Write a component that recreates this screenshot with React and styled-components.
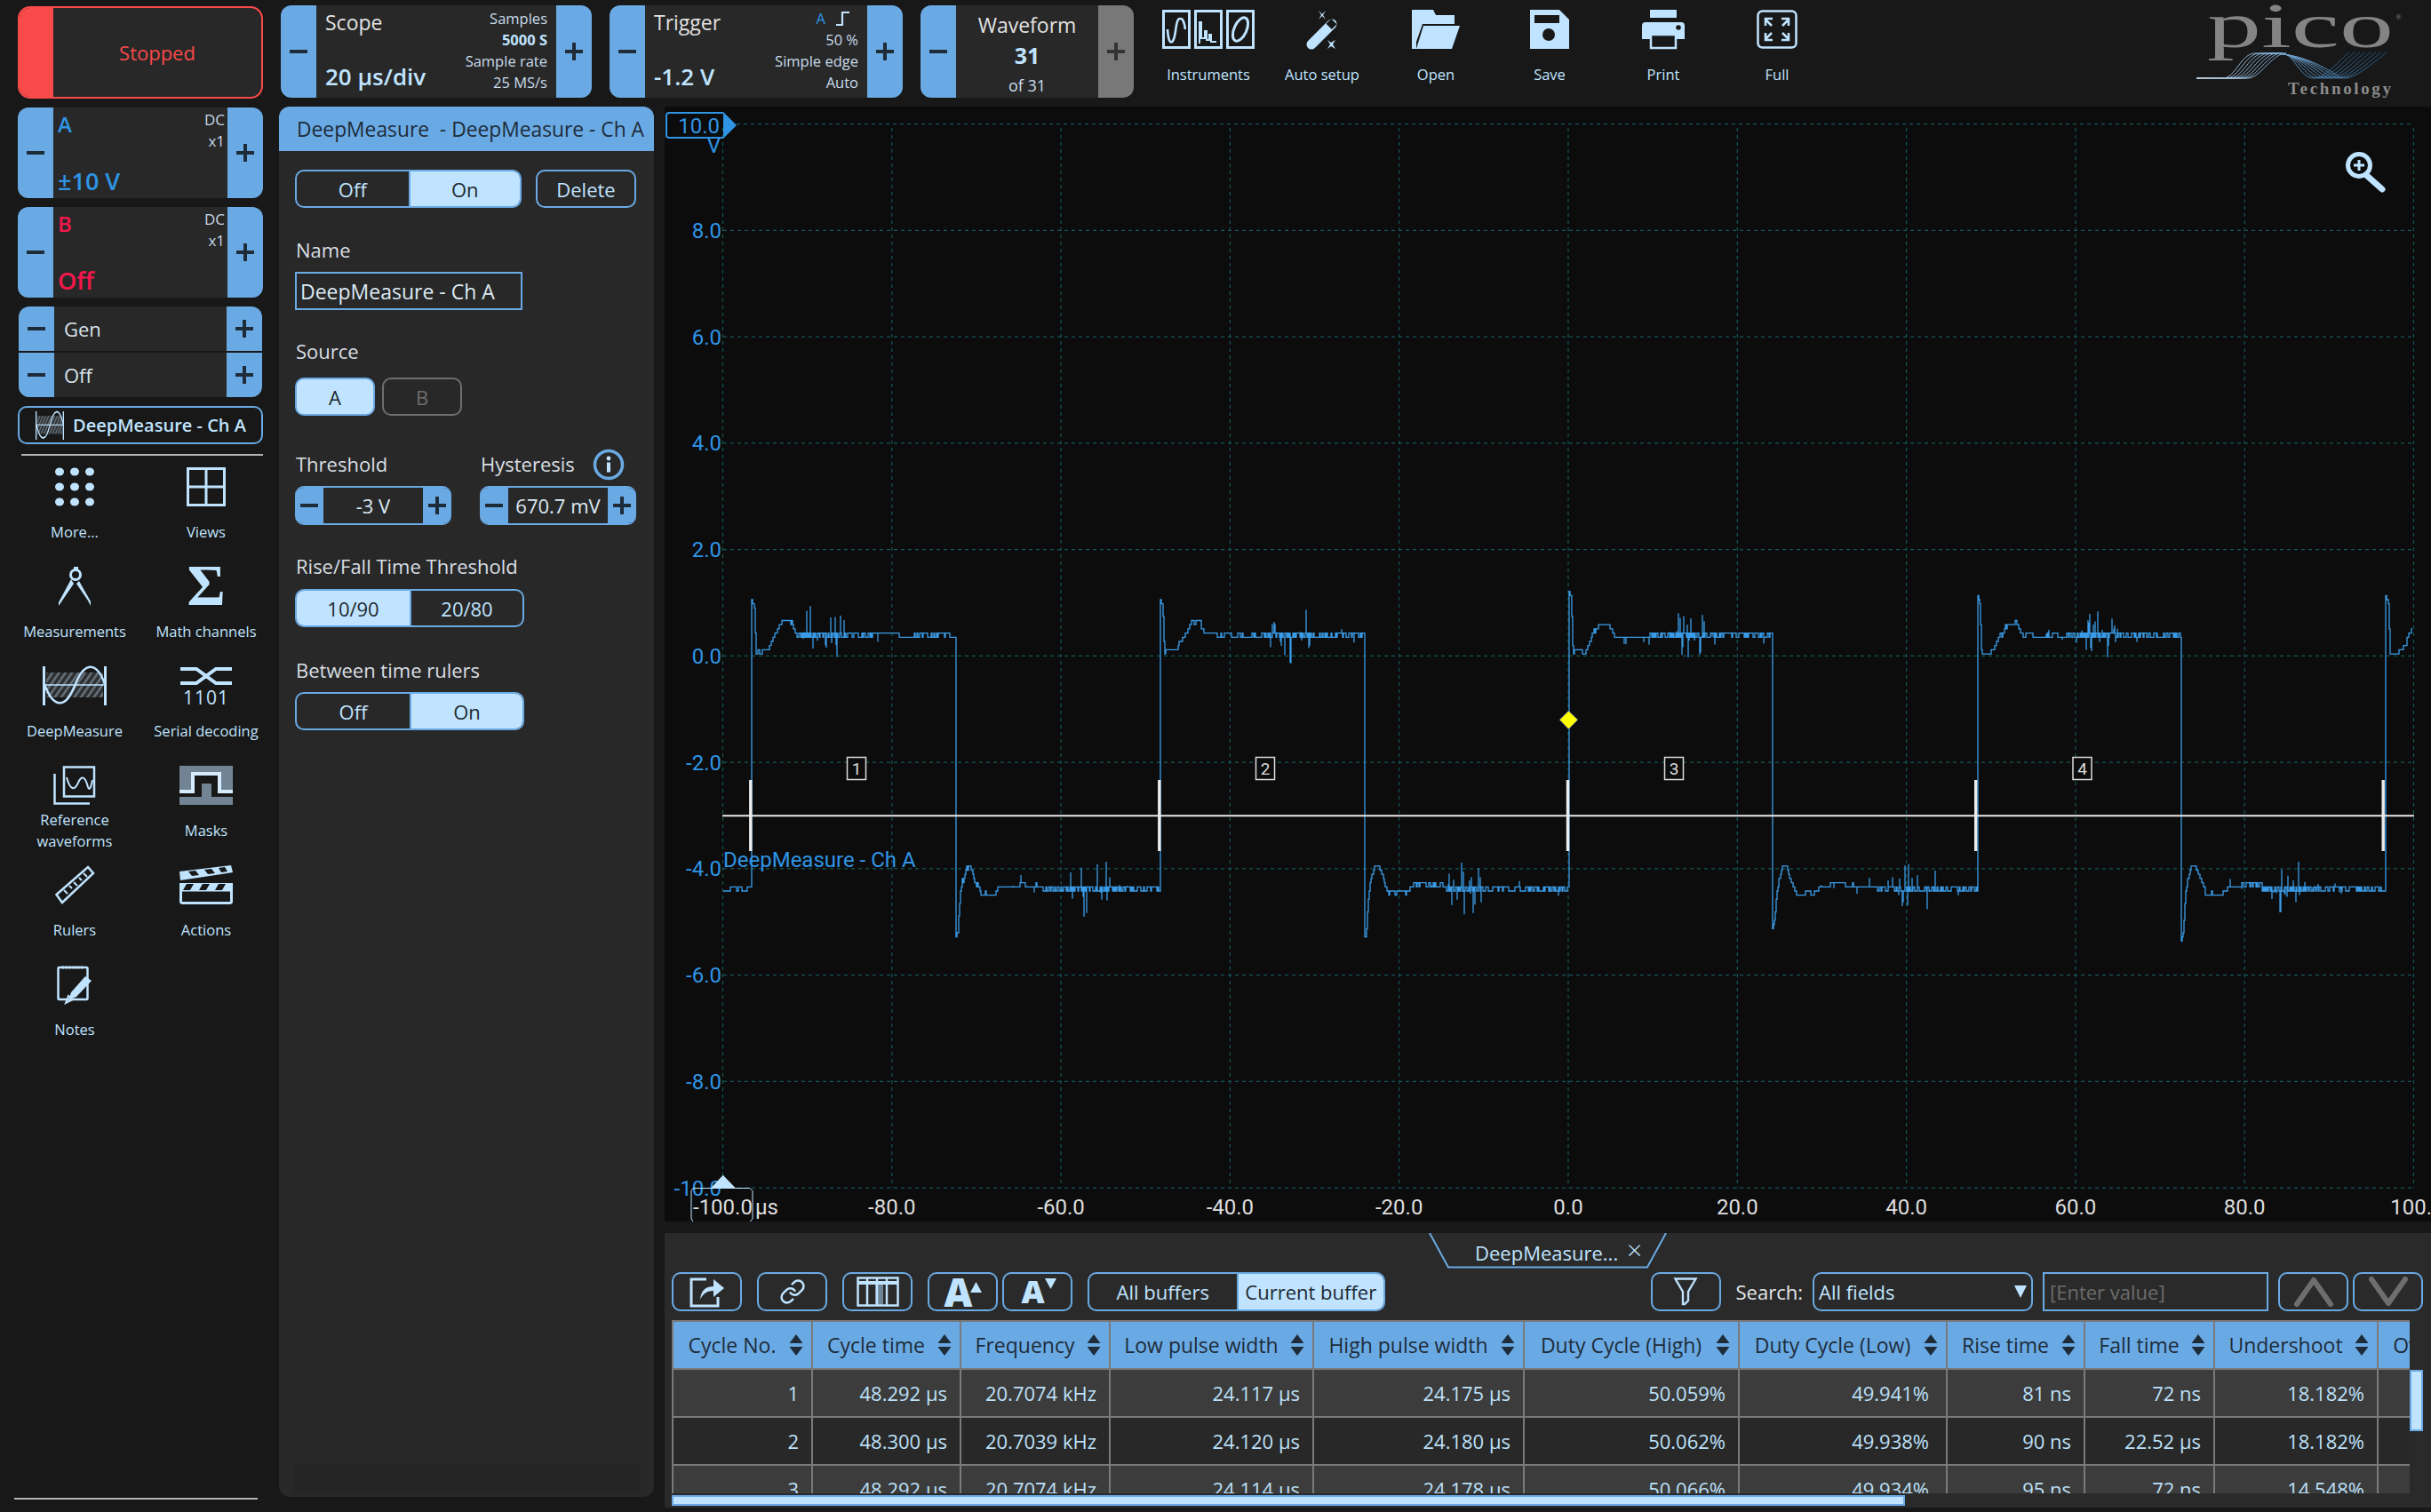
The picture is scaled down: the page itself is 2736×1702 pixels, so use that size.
import React from "react";
import styled, { createGlobalStyle } from "styled-components";
import { Link } from "lucide-react";

const ICE = "#c0e4ff";
const BLUE = "#6aaae4";
const BG = "#181818";
const PANEL = "#282828";
const INK = "#1e2c3a";
const SCOPE_BLUE = "#2f94e4";
const GRID = "#14565a";

const GlobalStyle = createGlobalStyle`
  html, body { margin: 0; padding: 0; background: ${BG}; }
  * { box-sizing: border-box; }
  body { font-family: "Open Sans", "Noto Sans", sans-serif; color: ${ICE}; }
`;

const Page = styled.div`
  width: 2736px;
  height: 1702px;
  display: grid;
  grid-template-columns: 314px 1fr;
  background: ${BG};
  overflow: hidden;
`;

/* ---------- left column ---------- */

const Sidebar = styled.aside`
  display: flex;
  flex-direction: column;
  gap: 10px;
  padding: 7px 18px 14px 20px;
  height: 1702px;
`;

const RunState = styled.div`
  height: 104px;
  display: flex;
  border: 2px solid #f94a4a;
  border-radius: 14px;
  background: ${PANEL};
  overflow: hidden;
`;

const RunFlag = styled.div`
  width: 38px;
  background: #f94a4a;
`;

const RunText = styled.div`
  flex: 1;
  display: flex;
  align-items: center;
  justify-content: center;
  color: #f94a4a;
  font-size: 22px;
`;

const Card = styled.div`
  display: flex;
  height: ${(p) => p.$h || 102}px;
  width: ${(p) => (p.$w ? `${p.$w}px` : "auto")};
  background: ${PANEL};
  border-radius: 12px;
  overflow: hidden;
  flex: none;
`;

const Step = styled.div`
  position: relative;
  width: ${(p) => p.$w || 40}px;
  flex: none;
  background: ${(p) => (p.$muted ? "#787878" : BLUE)};

  &::before {
    content: "";
    position: absolute;
    left: 50%;
    top: 50%;
    width: ${(p) => p.$size || 20}px;
    height: 4px;
    transform: translate(-50%, -50%);
    background: ${(p) => (p.$muted ? "#333" : INK)};
  }
  ${(p) =>
    p.$plus &&
    `&::after {
      content: "";
      position: absolute;
      left: 50%;
      top: 50%;
      width: 4px;
      height: ${p.$size || 20}px;
      transform: translate(-50%, -50%);
      background: ${p.$muted ? "#333" : INK};
    }`}
`;

const ChannelBody = styled.div`
  flex: 1;
  display: flex;
  justify-content: space-between;
  padding: 2px 3px 0 5px;
  font-size: 17px;
`;

const ChannelMain = styled.div`
  display: flex;
  flex-direction: column;
  justify-content: space-between;
  color: ${(p) => p.$color};
  padding-bottom: 1px;
`;

const ChannelName = styled.div`
  font-size: 24px;
  line-height: 32px;
  font-weight: 600;
  margin-top: 1px;
`;

const ChannelRange = styled.div`
  font-size: 27px;
  line-height: 36px;
  font-weight: 600;
`;

const ChannelSide = styled.div`
  text-align: right;
  line-height: 24px;
  color: #c6d8e6;
`;

const GenStack = styled.div`
  display: flex;
  flex-direction: column;
  gap: 2px;
  flex: none;
  margin: 0 1px;
`;

const GenRow = styled(Card)`
  border-radius: ${(p) => (p.$top ? "12px 12px 0 0" : "0 0 12px 12px")};
`;

const GenText = styled.div`
  flex: 1;
  display: flex;
  align-items: center;
  padding-left: 11px;
  font-size: 22px;
  color: #d9e4ec;
`;

const ActiveTool = styled.div`
  height: 43px;
  flex: none;
  display: flex;
  align-items: center;
  gap: 10px;
  padding-left: 18px;
  border: 2px solid ${BLUE};
  border-radius: 10px;
  font-size: 20px;
  font-weight: 600;
  color: ${ICE};
  white-space: nowrap;
`;

const Rule = styled.div`
  height: 2px;
  flex: none;
  background: #b4b4b4;
  margin: 1px 0 0 4px;
`;

const BottomRule = styled(Rule)`
  margin: auto 6px 0 -4px;
`;

const ToolGrid = styled.div`
  display: grid;
  grid-template-columns: 148px 148px;
  grid-auto-rows: 112px;
  margin: 3px -10px 0;
`;

const Tool = styled.div`
  display: flex;
  flex-direction: column;
  align-items: center;
  width: ${(p) => p.$w || "auto"};
  flex: none;
`;

const ToolIcon = styled.div`
  height: 44px;
  display: flex;
  align-items: center;
`;

const ToolLabel = styled.div`
  height: 57px;
  display: flex;
  align-items: center;
  text-align: center;
  font-size: 16.5px;
  line-height: 24px;
  color: ${ICE};
`;

/* ---------- top toolbar ---------- */

const Main = styled.div`
  display: flex;
  flex-direction: column;
  min-width: 0;
`;

const TopBar = styled.header`
  height: 120px;
  flex: none;
  display: flex;
  align-items: flex-start;
  padding: 6px 29px 0 2px;
`;

const CardGap = styled.div`
  width: 20px;
  flex: none;
`;

const CardBody = styled.div`
  flex: 1;
  display: flex;
  justify-content: space-between;
  padding: 3px 10px 0;
`;

const CardMain = styled.div`
  display: flex;
  flex-direction: column;
  justify-content: space-between;
  padding: 0 0 6px;
`;

const CardTitle = styled.div`
  font-size: 23px;
  line-height: 32px;
  color: #e2e2e2;
`;

const CardValue = styled.div`
  font-size: 26px;
  line-height: 36px;
  font-weight: 600;
  color: ${ICE};
  white-space: nowrap;
`;

const CardSide = styled.div`
  text-align: right;
  font-size: 16.5px;
  line-height: 24px;
  color: #c8dceb;
  white-space: nowrap;
`;

const Strong = styled.div`
  font-weight: 700;
  color: ${ICE};
`;

const TrigSource = styled.div`
  display: flex;
  justify-content: flex-end;
  align-items: center;
  gap: 12px;
  color: ${SCOPE_BLUE};
  padding-right: 10px;
`;

const WaveformBody = styled.div`
  flex: 1;
  display: flex;
  flex-direction: column;
  align-items: center;
  padding-top: 5px;
  line-height: 34px;
  font-size: 23px;
  color: #e2e2e2;
`;

const WaveNumber = styled.div`
  font-size: 25px;
  font-weight: 700;
  color: ${ICE};
`;

const WaveOf = styled.div`
  font-size: 18px;
  color: #c8dceb;
`;

const ToolsRow = styled.div`
  display: flex;
  padding: 5px 0 0 20px;
`;

const LogoBox = styled.div`
  margin-left: auto;
`;

/* ---------- config panel ---------- */

const Workspace = styled.div`
  flex: 1;
  display: flex;
  min-height: 0;
`;

const ConfigPanel = styled.section`
  width: 422px;
  height: 1565px;
  flex: none;
  display: flex;
  flex-direction: column;
  background: ${PANEL};
  border-radius: 12px;
  overflow: hidden;
`;

const ConfigHeader = styled.div`
  height: 50px;
  flex: none;
  display: flex;
  align-items: center;
  padding-left: 20px;
  background: ${BLUE};
  color: ${INK};
  font-size: 22.8px;
  white-space: pre;
`;

const ConfigBody = styled.div`
  flex: 1;
  padding: 21px 20px 0 18px;
  display: flex;
  flex-direction: column;
  font-size: 22px;
`;

const TopActions = styled.div`
  display: flex;
  justify-content: space-between;
`;

const Toggle = styled.div`
  display: grid;
  grid-template-columns: 1fr 1fr;
  width: ${(p) => p.$w}px;
  height: ${(p) => p.$h || 43}px;
  border: 2px solid ${BLUE};
  border-radius: 10px;
  overflow: hidden;
  flex: none;
`;

const Segment = styled.div`
  display: flex;
  align-items: center;
  justify-content: center;
  background: ${(p) => (p.$on ? ICE : "transparent")};
  color: ${(p) => (p.$on ? "#20282f" : ICE)};
  white-space: nowrap;
  & + & {
    border-left: 2px solid ${BLUE};
  }
`;

const OutlineButton = styled.div`
  width: ${(p) => p.$w}px;
  height: ${(p) => p.$h || 43}px;
  flex: none;
  display: flex;
  align-items: center;
  justify-content: center;
  border: 2px solid ${(p) => (p.$off ? "#6e6e6e" : BLUE)};
  border-radius: 10px;
  background: ${(p) => (p.$on ? ICE : "transparent")};
  color: ${(p) => (p.$on ? "#20282f" : p.$off ? "#6e6e6e" : ICE)};
`;

const FieldLabel = styled.div`
  display: flex;
  align-items: center;
  height: 32px;
  margin-top: ${(p) => p.$top}px;
  margin-bottom: ${(p) => p.$bottom}px;
  padding: 0 0 3px 1px;
  color: #d9dfe4;
  white-space: nowrap;
`;

const NameInput = styled.div`
  width: 256px;
  height: 43px;
  display: flex;
  align-items: center;
  padding-left: 4px;
  border: 2px solid ${BLUE};
  font-size: 23px;
  color: #dceaf5;
`;

const SourceRow = styled.div`
  display: flex;
  gap: 8px;
`;

const ThresholdRow = styled.div`
  display: flex;
  margin-top: 39px;
`;

const ThresholdCol = styled.div`
  width: ${(p) => p.$w}px;
  flex: none;
`;

const InfoIcon = styled.svg`
  margin: 3px 0 0 20px;
  flex: none;
`;

const Stepper = styled.div`
  width: 176px;
  height: 44px;
  display: flex;
  border-radius: 10px;
  overflow: hidden;
  border-top: 2px solid ${BLUE};
  border-bottom: 2px solid ${BLUE};
`;

const StepperValue = styled.div`
  flex: 1;
  display: flex;
  align-items: center;
  justify-content: center;
  color: #dceaf5;
  white-space: nowrap;
`;

const PanelScrollTrack = styled.div`
  height: 32px;
  margin: auto -4px 5px -2px;
  background: #252525;
  flex: none;
`;

/* ---------- plot ---------- */

const RightColumn = styled.div`
  margin-left: 12px;
  flex: 1;
  min-width: 0;
  display: flex;
  flex-direction: column;
`;

const PlotBox = styled.div`
  height: 1255px;
  flex: none;
  background: #0c0c0c;
`;

const PlotSvg = styled.svg`
  display: block;
  font-family: Roboto, sans-serif;
`;

/* ---------- data table ---------- */

const DataPanel = styled.section`
  position: relative;
  height: 309px;
  margin-top: 13px;
  flex: none;
  background: #2a2a2a;
`;

const TabStrip = styled.div`
  height: 44px;
  padding-left: 860px;
`;

const Tab = styled.div`
  position: relative;
  width: 268px;
  height: 40px;
  display: flex;
  align-items: center;
  justify-content: space-between;
  padding: 3px 28px 0 52px;
  font-size: 22px;
  color: ${ICE};
`;

const TabEdge = styled.svg`
  position: absolute;
  left: 0;
  top: 0;
`;

const TabClose = styled.span`
  font-size: 30px;
  font-weight: 300;
  line-height: 1;
  margin-top: -6px;
`;

const ActionRow = styled.div`
  height: 44px;
  display: flex;
  padding: 0 9px 0 8px;
  font-size: 22px;
`;

const ActionButton = styled.div`
  position: relative;
  width: 79px;
  height: 44px;
  flex: none;
  margin-left: ${(p) => p.$gap ?? 17}px;
  display: flex;
  align-items: center;
  justify-content: center;
  border: 2px solid ${BLUE};
  border-radius: 10px;
  color: ${ICE};
`;

const FontGlyph = styled.span`
  font-weight: 800;
  font-size: ${(p) => p.$size}px;
  line-height: 1;
  margin-right: 10px;
`;

const FontArrow = styled.svg`
  position: absolute;
  right: 16px;
  top: ${(p) => p.$top}px;
`;

const BufferToggle = styled(Toggle)`
  margin-left: 17px;
`;

const SearchGroup = styled.div`
  margin-left: auto;
  display: flex;
  align-items: center;
`;

const SearchLabel = styled.div`
  margin: 0 11px 0 17px;
  color: #e4e8eb;
`;

const SelectBox = styled.div`
  width: 248px;
  height: 44px;
  display: flex;
  align-items: center;
  justify-content: space-between;
  padding: 0 5px;
  border: 2px solid ${BLUE};
  border-radius: 10px;
  color: ${ICE};

  &::after {
    content: "";
    border-left: 7.5px solid transparent;
    border-right: 7.5px solid transparent;
    border-top: 14px solid ${ICE};
  }
`;

const EnterValue = styled.div`
  width: 254px;
  height: 44px;
  margin-left: 11px;
  display: flex;
  align-items: center;
  padding-left: 6px;
  border: 2px solid ${BLUE};
  color: #6c6c6c;
`;

const TableWrap = styled.div`
  width: 1956px;
  height: 195px;
  margin: 10px 0 0 8px;
  overflow: hidden;
  border-top: 2px solid #7a7a7a;
  border-left: 2px solid #7a7a7a;
  font-size: 22px;
`;

const COLS = "157px 167px 168px 229px 237px 242px 234px 155px 146px 184px 170px";

const HeadRow = styled.div`
  display: grid;
  grid-template-columns: ${COLS};
  height: 54px;
  background: ${BLUE};
  color: ${INK};
`;

const HeadCell = styled.div`
  display: flex;
  align-items: center;
  padding: 0 9px 0 2px;
  border-right: 2px solid #7a7a7a;
  border-bottom: 2px solid #7a7a7a;
  font-size: 23px;
  white-space: nowrap;
  overflow: hidden;
`;

const HeadText = styled.div`
  flex: 1;
  text-align: center;
`;

const SortGlyph = styled.svg`
  flex: none;
`;

const DataRow = styled.div`
  display: grid;
  grid-template-columns: ${COLS};
  height: 54px;
  background: ${(p) => (p.$odd ? "#3c3c3c" : "#282828")};
`;

const DataCell = styled.div`
  display: flex;
  align-items: center;
  justify-content: flex-end;
  padding-right: 14px;
  border-right: 2px solid #7a7a7a;
  border-bottom: 2px solid #7a7a7a;
  color: #bde0f8;
  white-space: nowrap;

  &:nth-child(7) {
    padding-right: 19px;
  }
`;

const VScrollThumb = styled.div`
  position: absolute;
  left: 1964px;
  top: 154px;
  width: 15px;
  height: 69px;
  background: ${ICE};
  border: 2px solid ${BLUE};
`;

const HScrollThumb = styled.div`
  width: 1388px;
  height: 12px;
  margin: 2px 0 0 8px;
  background: ${ICE};
  border: 2px solid ${BLUE};
`;

/* ---------- icons ---------- */

const Ice = ({ w, h, children, fill = ICE, stroke = "none", sw = 0, vb }) => (
  <svg
    width={w}
    height={h}
    viewBox={vb || `0 0 ${w} ${h}`}
    preserveAspectRatio="none"
    fill={fill}
    stroke={stroke}
    strokeWidth={sw}
    style={{ display: "block", overflow: "visible" }}
  >
    {children}
  </svg>
);

const DotsIcon = () => (
  <Ice w={44} h={44}>
    {[5, 22, 39].map((y) =>
      [5, 22, 39].map((x) => <ellipse key={`${x}${y}`} cx={x} cy={y} rx={5} ry={4.6} />)
    )}
  </Ice>
);

const ViewsIcon = () => (
  <Ice w={44} h={44} fill="none" stroke={ICE} sw={3}>
    <rect x={1.5} y={1.5} width={41} height={41} />
    <path d="M22 1.5V42.5M1.5 22H42.5" />
  </Ice>
);

const CompassIcon = () => (
  <Ice w={36} h={44}>
    <circle cx={19} cy={9} r={5.5} fill="none" stroke={ICE} strokeWidth={3} />
    <path d="M17 0h5v3h-5z" />
    <path d="M14 14L0 40v4L17 19zM23 16l-3 3 13 19 3 6V39z" />
  </Ice>
);

const SigmaIcon = () => (
  <Ice w={44} h={44}>
    <text
      x={22}
      y={43}
      textAnchor="middle"
      fontFamily="Liberation Serif, serif"
      fontWeight={700}
      fontSize={66}
    >
      Σ
    </text>
  </Ice>
);

const DeepMeasureIcon = ({ w = 72, h = 44 }) => (
  <Ice w={w} h={h} vb="0 0 72 44">
    <defs>
      <pattern id={`hatch${w}`} width="6" height="6" patternUnits="userSpaceOnUse" patternTransform="rotate(35)">
        <rect width="6" height="6" fill="#2c2e30" />
        <rect width="2.5" height="6" fill="#66727c" />
      </pattern>
    </defs>
    <rect x={4} y={7} width={64} height={28} fill={`url(#hatch${w})`} />
    <rect x={0} y={0} width={3} height={44} />
    <rect x={69} y={0} width={3} height={44} />
    <path d="M2 20C12 48 26 48 36 22S60 -8 70 20" fill="none" stroke={ICE} strokeWidth={2.5} />
    <path d="M2 21H70" stroke={ICE} strokeWidth={1.5} />
  </Ice>
);

const SerialIcon = () => (
  <Ice w={58} h={44}>
    <path d="M0 3H18L40 19H58M0 19H18L40 3H58" fill="none" stroke={ICE} strokeWidth={4} />
    <text x={29} y={43} textAnchor="middle" fontFamily="Open Sans, sans-serif" fontSize={21} letterSpacing={1}>
      1101
    </text>
  </Ice>
);

const ReferenceIcon = () => (
  <Ice w={48} h={44} fill="none" stroke={ICE} sw={2.5}>
    <path d="M1.5 9V42.5H41" />
    <rect x={12} y={1.5} width={34} height={33} />
    <path d="M15 13C19 28 24 28 28 19S36 12 39 24c1 3 3 3 5-8" strokeWidth={2} />
  </Ice>
);

const MasksIcon = () => (
  <Ice w={60} h={44} fill="#728494">
    <rect width={60} height={44} />
    <path d="M0 28H14V8H46V28H60V35H0Z" fill="#181818" />
    <path d="M0 29H15V9H45V29H60" fill="none" stroke="#d6ebfb" strokeWidth={4} />
    <rect x={25} y={20} width={11} height={15} />
  </Ice>
);

const RulerIcon = () => (
  <Ice w={44} h={44} fill="none" stroke={ICE} sw={2.5}>
    <path d="M1.5 33L37 2l6 7L8 42z" />
    <path d="M10 28l4 4M16 23l3 3M21 19l4 4M27 14l3 3M32 9l4 4" strokeWidth={2} />
  </Ice>
);

const ClapperIcon = () => (
  <Ice w={60} h={44}>
    <path d="M0 7L58 0l2 8L1 17z" />
    <path d="M0 20H60V29H0z" />
    <rect x={1.5} y={28} width={57} height={14.5} rx={2} fill="none" stroke={ICE} strokeWidth={3} />
    <path d="M10 7l8-1 4 5-8 1zM28 5l8-1 4 5-8 1zM44 3l7-1 3 5-7 1zM8 21h8l-4 7H4zM26 21h8l-4 7h-8zM44 21h8l-4 7h-8z" fill="#181818" />
  </Ice>
);

const NotesIcon = () => (
  <Ice w={40} h={44} fill="none" stroke={ICE} sw={2.5}>
    <rect x={1.5} y={3} width={33} height={36} rx={1} />
    <path d="M6 3h24" strokeWidth={3} strokeDasharray="2 1.5" />
    <path d="M13 40l3-9L32 13l7 5-17 18z" fill={ICE} stroke="none" />
    <path d="M10 43l3-8 5 4z" fill="none" strokeWidth={2} />
  </Ice>
);

const InstrumentsIcon = () => (
  <Ice w={104} h={44} fill="none" stroke={ICE} sw={3}>
    <rect x={1.5} y={1.5} width={29} height={41} />
    <rect x={37.5} y={1.5} width={29} height={41} />
    <rect x={73.5} y={1.5} width={29} height={41} />
    <path d="M6 22c1 20 7 18 9 2s4-14 6-14 4 4 5 12" strokeWidth={2.6} />
    <path d="M42 38V14h2v18h4v-8h2v10h3v-6h2v8h6" strokeWidth={2} />
    <ellipse cx={88} cy={22} rx={7} ry={14} transform="rotate(24 88 22)" strokeWidth={3} />
  </Ice>
);

const WandIcon = () => (
  <Ice w={37} h={44}>
    <path d="M6 39L29 16" stroke={ICE} strokeWidth={11} strokeLinecap="round" />
    <rect x={24} y={12} width={9} height={8} transform="rotate(45 28.5 16)" fill="#181818" />
    <path d="M14 1l4 4 4-4-3 5 3 5-4-4-4 4 3-5zM24 34l4 3 5-3-3 5 3 5-5-3-4 3 3-5z" />
  </Ice>
);

const FolderIcon = () => (
  <Ice w={54} h={44}>
    <path d="M0 0H24L27 6H48V16H12L5 36V44H0Z" />
    <path d="M13 18H54L45 44H5Z" />
  </Ice>
);

const SaveIcon = () => (
  <Ice w={44} h={44}>
    <path d="M0 0H33L44 11V44H0Z" />
    <rect x={5} y={6} width={28} height={9} fill="#181818" />
    <circle cx={21} cy={28} r={7} fill="#181818" />
  </Ice>
);

const PrintIcon = () => (
  <Ice w={48} h={44}>
    <rect x={9} width={30} height={9} />
    <path d="M4 14H44a4 4 0 0 1 4 4V33H0V18a4 4 0 0 1 4-4Z" />
    <circle cx={41} cy={20} r={2.8} fill="#181818" />
    <rect x={10} y={28} width={28} height={15} fill="#181818" stroke={ICE} strokeWidth={2.5} />
  </Ice>
);

const FullIcon = () => (
  <Ice w={46} h={44} fill="none" stroke={ICE} sw={2.5}>
    <rect x={1.5} y={1.5} width={43} height={41} rx={5} />
    <path d="M17 18L10 11M10 18V10H18M29 18l7-7M36 18V10H28M17 26l-7 7M10 26v8h8M29 26l7 7M36 26v8h-8" />
  </Ice>
);

const EdgeIcon = () => (
  <Ice w={15} h={16} fill="none" stroke={ICE} sw={2.2}>
    <path d="M0 15H7V1H15" />
  </Ice>
);

const ShareIcon = () => (
  <Ice w={40} h={36} fill="none" stroke={ICE} sw={3}>
    <path d="M19 4H2V34H32V24" />
    <path d="M12 27C13 15 20 12 27 12V4L39 14 27 24V17C20 17 15 20 12 27Z" fill={ICE} stroke="none" />
  </Ice>
);

const ColumnsIcon = () => (
  <Ice w={48} h={34} fill="none" stroke={ICE} sw={2.5}>
    <rect x={21} y={6} width={9} height={26} fill="#6f8698" stroke="none" />
    <rect x={1.5} y={1.5} width={45} height={31} />
    <path d="M1.5 7H46.5" strokeWidth={4} />
    <path d="M12 1.5V32.5M23 1.5V32.5M34 1.5V32.5" />
  </Ice>
);

const FilterIcon = () => (
  <Ice w={26} h={32} fill="none" stroke={ICE} sw={2.4}>
    <path d="M1.5 1.5H24.5L16 16V26L12 30H10V16Z" />
  </Ice>
);

const Chevron = ({ up }) => (
  <Ice w={44} h={32} fill="none" stroke="#6e6e6e" sw={6}>
    <path d={up ? "M3 30L22 3L41 30" : "M3 2L22 29L41 2"} strokeLinecap="round" strokeLinejoin="round" />
  </Ice>
);

const Sort = () => (
  <SortGlyph width="16" height="24" viewBox="0 0 16 24">
    <path d="M8 0L15.5 10H.5ZM8 24L.5 14H15.5Z" fill={INK} />
  </SortGlyph>
);

/* pulse sweep used in the logo */
const pulseLines = Array.from({ length: 8 }, (_, i) => i);

const Logo = () => (
  <svg width="235" height="106" viewBox="0 0 235 106" style={{ display: "block", overflow: "visible" }}>
    <defs>
      <linearGradient id="logoFade" x1="0" x2="1">
        <stop offset="0" stopColor="#b8c8d4" />
        <stop offset="0.55" stopColor="#6a9ecb" />
        <stop offset="1" stopColor="#1c4f78" />
      </linearGradient>
    </defs>
    <text
      x={12}
      y={47}
      fill="#848484"
      fontFamily="Liberation Serif, serif"
      fontSize={72}
      textLength={210}
      lengthAdjust="spacingAndGlyphs"
    >
      pico
    </text>
    <text x={224} y={16} fill="#848484" fontFamily="Liberation Serif, serif" fontSize={9}>
      ®
    </text>
    <g fill="none" stroke="url(#logoFade)" strokeWidth={1}>
      {pulseLines.map((i) => (
        <path
          key={i}
          d={`M0 82H${30 + i * 4}C${44 + i * 4} 82 ${50 + i * 5} 54 ${66 + i * 5} 54H${96 - i * 2}C${110 + i * 3} 54 ${
            116 + i * 6
          } 82 ${132 + i * 5} 82C${146 + i * 5} 82 ${162 + i * 6} 60 ${172 + i * 6} 53`}
        />
      ))}
    </g>
    <text
      x={103}
      y={100}
      fill="#8c8c8c"
      fontFamily="Liberation Serif, serif"
      fontWeight={700}
      fontSize={19}
      textLength={116}
    >
      Technology
    </text>
  </svg>
);

/* ---------- trace data ---------- */

const RISE = [846, 1305.6, 1765.4, 2225.2, 2685];
const FALL = [1076, 1535.6, 1995, 2455];
const PEAK = [675, 675, 664, 670, 672];
const TROUGH = [1056, 1058, 1045, 1058];
const BURST_HIGH = [82, 145, 145, 140];
const BURST_LOW = [150, 110, 165, 120];

const rng = (seed) => () => {
  seed = (seed + 0x6d2b79f5) | 0;
  let t = Math.imul(seed ^ (seed >>> 15), 1 | seed);
  t = (t + Math.imul(t ^ (t >>> 7), 61 | t)) ^ t;
  return ((t ^ (t >>> 14)) >>> 0) / 4294967296;
};

const interp = (keys, t) => {
  for (let i = 1; i < keys.length; i++) {
    if (t <= keys[i][0]) {
      const [t0, y0] = keys[i - 1];
      const [t1, y1] = keys[i];
      return y0 + ((y1 - y0) * (t - t0)) / (t1 - t0);
    }
  }
  return keys[keys.length - 1][1];
};

const buildTrace = () => {
  const rand = rng(77);
  const quant = (y, base) => base + Math.round((y - base) / 4.7) * 4.7;
  let d = "M814 1003";
  let flip = false;

  const runSegment = (from, to, keys, base, burst) => {
    const start = Math.ceil(from);
    for (let x = start; x < to; x++) {
      const t = x - from;
      let y = quant(interp(keys, t), base);
      const dist = Math.abs(t - burst);
      const settled = t > 52;
      const nearEnd = to - x < 50;
      const p = !settled ? 0.12 : dist < 30 ? 0.6 : nearEnd || dist < 55 ? 0.42 : 0.07;
      if (rand() < p) flip = !flip;
      if (flip && (settled || t > 6)) y -= 4.7;
      d += `H${x}V${y.toFixed(1)}`;
      if (settled && dist < 24 && rand() < 0.3) {
        const spike = (rand() - 0.5) * 62;
        d += `V${(y + spike).toFixed(1)}V${y.toFixed(1)}`;
      } else if (settled && rand() < 0.05) {
        const spike = (rand() - 0.5) * 22;
        d += `V${(y + spike).toFixed(1)}V${y.toFixed(1)}`;
      }
    }
  };

  const lowKeys = (i) => [
    [0, TROUGH[i]],
    [2, TROUGH[i] - 8],
    [5, 1003],
    [12, 978],
    [17, 982],
    [28, 1008],
    [44, 1008],
    [52, 1000],
    [230, 1003],
  ];
  const highKeys = (i) => [
    [0, PEAK[i]],
    [3, PEAK[i] + 8],
    [5, 738],
    [19, 735],
    [24, 722],
    [36, 701],
    [44, 701],
    [52, 717],
    [230, 717],
  ];

  runSegment(814, 846, [[0, 1003], [60, 1003]], 1003, 400);
  RISE.forEach((r, i) => {
    const end = i < FALL.length ? FALL[i] : 2716;
    runSegment(r, end, highKeys(i), 717.3, BURST_HIGH[i] ?? 400);
    if (i < FALL.length) {
      runSegment(FALL[i], RISE[i + 1], lowKeys(i), 1003, BURST_LOW[i]);
    }
  });
  return d;
};

const TRACE = buildTrace();

const X_TICKS = Array.from({ length: 11 }, (_, i) => 813.5 + i * 190.3);
const Y_TICKS = Array.from({ length: 11 }, (_, i) => 139.6 + i * 119.75);
const Y_LABELS = ["8.0", "6.0", "4.0", "2.0", "0.0", "-2.0", "-4.0", "-6.0", "-8.0", "-10.0"];
const X_LABELS = ["-80.0", "-60.0", "-40.0", "-20.0", "0.0", "20.0", "40.0", "60.0", "80.0", "100.0"];
const RULER_X = [844.6, 1304.6, 1764.3, 2223.5, 2682];
const BOX_X = [964, 1424, 1884, 2343.5];

const Plot = () => (
  <PlotBox>
    <PlotSvg width="1988" height="1255" viewBox="748 120 1988 1255">
      <g stroke={GRID} strokeWidth={1.2} strokeDasharray="4 4">
        {X_TICKS.map((x) => (
          <line key={x} x1={x} x2={x} y1={144} y2={1337} />
        ))}
        {Y_TICKS.map((y) => (
          <line key={y} x1={y < 145 ? 829 : 814} x2={2716} y1={y} y2={y} />
        ))}
      </g>

      <path d={TRACE} fill="none" stroke="#3a9ce8" strokeWidth={1.3} />

      <line x1={813} x2={2717} y1={918.3} y2={918.3} stroke="#e8e8e8" strokeWidth={2} />
      {RULER_X.map((x) => (
        <rect key={x} x={x - 1.5} y={878} width={3.4} height={80} fill="#ececec" />
      ))}
      {BOX_X.map((x, i) => (
        <g key={x}>
          <rect x={x - 10.5} y={852.5} width={21} height={25} fill="#0c0c0c" stroke="#dcdcdc" strokeWidth={1.5} />
          <text x={x} y={871.5} textAnchor="middle" fill="#dcdcdc" fontSize={19}>
            {i + 1}
          </text>
        </g>
      ))}

      <path d="M1765.4 800L1776 810.3L1765.4 821L1755 810.3Z" fill="#ffff00" stroke="#2020c0" strokeWidth={0.8} />

      <g fill={SCOPE_BLUE} fontSize={24}>
        <text x={814} y={976}>DeepMeasure - Ch A</text>
        {Y_LABELS.map((label, i) => (
          <text key={label} x={812} y={Y_TICKS[i + 1] + 8.5} textAnchor="end">
            {label}
          </text>
        ))}
        <text x={811} y={172} textAnchor="end">V</text>
        <text x={810} y={149.5} textAnchor="end">10.0</text>
      </g>

      <path d="M814 127H753a3 3 0 0 0-3 3V152a3 3 0 0 0 3 3H814" fill="none" stroke={SCOPE_BLUE} strokeWidth={2} />
      <path d="M814 126L829 141L814 156Z" fill={SCOPE_BLUE} />

      <path d="M813.7 1322.7L828 1337.5H800Z" fill={ICE} />
      <path
        d="M780 1337.5H844L847 1340.5V1372L844 1375M780 1337.5L778 1340.5V1372L780 1375"
        fill="none"
        stroke={ICE}
        strokeWidth={1}
      />

      <g fill="#dedede" fontSize={24}>
        <text x={780} y={1366.5}>-100.0</text>
        <text x={850} y={1366.5}>µs</text>
        {X_LABELS.map((label, i) => (
          <text key={label} x={X_TICKS[i + 1] + (i === 9 ? 4 : 0)} y={1366.5} textAnchor="middle">
            {label}
          </text>
        ))}
      </g>

      {/* zoom tool */}
      <g>
        <circle cx={2655} cy={186} r={12.5} fill="none" stroke={ICE} strokeWidth={5} />
        <path d="M2663 197L2681 213" stroke={ICE} strokeWidth={7} strokeLinecap="round" />
        <path d="M2649 186H2661M2655 180V192" stroke={ICE} strokeWidth={3} />
      </g>
    </PlotSvg>
  </PlotBox>
);

/* ---------- content ---------- */

const HEADERS = [
  "Cycle No.",
  "Cycle time",
  "Frequency",
  "Low pulse width",
  "High pulse width",
  "Duty Cycle (High)",
  "Duty Cycle (Low)",
  "Rise time",
  "Fall time",
  "Undershoot",
  "Overshoot",
];

const ROWS = [
  ["1", "48.292 µs", "20.7074 kHz", "24.117 µs", "24.175 µs", "50.059%", "49.941%", "81 ns", "72 ns", "18.182%", ""],
  ["2", "48.300 µs", "20.7039 kHz", "24.120 µs", "24.180 µs", "50.062%", "49.938%", "90 ns", "22.52 µs", "18.182%", ""],
  ["3", "48.292 µs", "20.7074 kHz", "24.114 µs", "24.178 µs", "50.066%", "49.934%", "95 ns", "72 ns", "14.548%", ""],
];

const SIDE_TOOLS = [
  ["More...", <DotsIcon />],
  ["Views", <ViewsIcon />],
  ["Measurements", <CompassIcon />],
  ["Math channels", <SigmaIcon />],
  ["DeepMeasure", <DeepMeasureIcon />],
  ["Serial decoding", <SerialIcon />],
  ["Reference waveforms", <ReferenceIcon />],
  ["Masks", <MasksIcon />],
  ["Rulers", <RulerIcon />],
  ["Actions", <ClapperIcon />],
  ["Notes", <NotesIcon />],
];

const TOP_TOOLS = [
  ["Instruments", <InstrumentsIcon />],
  ["Auto setup", <WandIcon />],
  ["Open", <FolderIcon />],
  ["Save", <SaveIcon />],
  ["Print", <PrintIcon />],
  ["Full", <FullIcon />],
];

const Channel = ({ name, range, color }) => (
  <Card>
    <Step />
    <ChannelBody>
      <ChannelMain $color={color}>
        <ChannelName>{name}</ChannelName>
        <ChannelRange>{range}</ChannelRange>
      </ChannelMain>
      <ChannelSide>
        DC
        <br />
        x1
      </ChannelSide>
    </ChannelBody>
    <Step $plus />
  </Card>
);

const Left = () => (
  <Sidebar>
    <RunState>
      <RunFlag />
      <RunText>Stopped</RunText>
    </RunState>
    <Channel name="A" range="±10 V" color="#2f94e4" />
    <Channel name="B" range="Off" color="#f5174c" />
    <GenStack>
      <GenRow $h={50} $top>
        <Step />
        <GenText>Gen</GenText>
        <Step $plus />
      </GenRow>
      <GenRow $h={50}>
        <Step />
        <GenText>Off</GenText>
        <Step $plus />
      </GenRow>
    </GenStack>
    <ActiveTool>
      <DeepMeasureIcon w={32} h={32} />
      DeepMeasure - Ch A
    </ActiveTool>
    <Rule />
    <ToolGrid>
      {SIDE_TOOLS.map(([label, icon]) => (
        <Tool key={label}>
          <ToolIcon>{icon}</ToolIcon>
          <ToolLabel>{label}</ToolLabel>
        </Tool>
      ))}
    </ToolGrid>
    <BottomRule />
  </Sidebar>
);

const Top = () => (
  <TopBar>
    <Card $w={350} $h={104}>
      <Step />
      <CardBody>
        <CardMain>
          <CardTitle>Scope</CardTitle>
          <CardValue>20 µs/div</CardValue>
        </CardMain>
        <CardSide>
          <div>Samples</div>
          <Strong>5000 S</Strong>
          <div>Sample rate</div>
          <div>25 MS/s</div>
        </CardSide>
      </CardBody>
      <Step $plus />
    </Card>
    <CardGap />
    <Card $w={330} $h={104}>
      <Step />
      <CardBody>
        <CardMain>
          <CardTitle>Trigger</CardTitle>
          <CardValue>-1.2 V</CardValue>
        </CardMain>
        <CardSide>
          <TrigSource>
            A <EdgeIcon />
          </TrigSource>
          <div>50 %</div>
          <div>Simple edge</div>
          <div>Auto</div>
        </CardSide>
      </CardBody>
      <Step $plus />
    </Card>
    <CardGap />
    <Card $w={240} $h={104}>
      <Step />
      <WaveformBody>
        <div>Waveform</div>
        <WaveNumber>31</WaveNumber>
        <WaveOf>of 31</WaveOf>
      </WaveformBody>
      <Step $plus $muted />
    </Card>
    <ToolsRow>
      {TOP_TOOLS.map(([label, icon]) => (
        <Tool key={label} $w="128px">
          <ToolIcon>{icon}</ToolIcon>
          <ToolLabel>{label}</ToolLabel>
        </Tool>
      ))}
    </ToolsRow>
    <LogoBox>
      <Logo />
    </LogoBox>
  </TopBar>
);

const Config = () => (
  <ConfigPanel>
    <ConfigHeader>DeepMeasure  - DeepMeasure - Ch A</ConfigHeader>
    <ConfigBody>
      <TopActions>
        <Toggle $w={255}>
          <Segment>Off</Segment>
          <Segment $on>On</Segment>
        </Toggle>
        <OutlineButton $w={113}>Delete</OutlineButton>
      </TopActions>

      <FieldLabel $top={32} $bottom={8}>Name</FieldLabel>
      <NameInput>DeepMeasure - Ch A</NameInput>

      <FieldLabel $top={31} $bottom={13}>Source</FieldLabel>
      <SourceRow>
        <OutlineButton $w={90} $on>A</OutlineButton>
        <OutlineButton $w={90} $off>B</OutlineButton>
      </SourceRow>

      <ThresholdRow>
        <ThresholdCol $w={208}>
          <FieldLabel $top={0} $bottom={8}>Threshold</FieldLabel>
          <Stepper>
            <Step $w={32} $size={20} />
            <StepperValue>-3 V</StepperValue>
            <Step $w={32} $size={20} $plus />
          </Stepper>
        </ThresholdCol>
        <ThresholdCol $w={176}>
          <FieldLabel $top={0} $bottom={8}>
            Hysteresis
            <InfoIcon width="36" height="36" viewBox="0 0 36 36">
              <circle cx="18" cy="18" r="15.5" fill="none" stroke={BLUE} strokeWidth="3.5" />
              <circle cx="18" cy="11" r="2.4" fill={ICE} />
              <rect x="16" y="15.5" width="4" height="11" fill={ICE} />
            </InfoIcon>
          </FieldLabel>
          <Stepper>
            <Step $w={32} $size={20} />
            <StepperValue>670.7 mV</StepperValue>
            <Step $w={32} $size={20} $plus />
          </Stepper>
        </ThresholdCol>
      </ThresholdRow>

      <FieldLabel $top={31} $bottom={9}>Rise/Fall Time Threshold</FieldLabel>
      <Toggle $w={258}>
        <Segment $on>10/90</Segment>
        <Segment>20/80</Segment>
      </Toggle>

      <FieldLabel $top={33} $bottom={8}>Between time rulers</FieldLabel>
      <Toggle $w={258}>
        <Segment>Off</Segment>
        <Segment $on>On</Segment>
      </Toggle>

      <PanelScrollTrack />
    </ConfigBody>
  </ConfigPanel>
);

const DataTable = () => (
  <DataPanel>
    <TabStrip>
      <Tab>
        <TabEdge width="268" height="40" viewBox="0 0 268 40" fill="none" stroke={BLUE} strokeWidth="2">
          <path d="M1 0L22 38.5H246L267 0" />
        </TabEdge>
        <span>DeepMeasure...</span>
        <TabClose>×</TabClose>
      </Tab>
    </TabStrip>
    <ActionRow>
      <ActionButton $gap={0}>
        <ShareIcon />
      </ActionButton>
      <ActionButton>
        <Link size={30} strokeWidth={2} />
      </ActionButton>
      <ActionButton>
        <ColumnsIcon />
      </ActionButton>
      <ActionButton>
        <FontGlyph $size={44}>A</FontGlyph>
        <FontArrow $top={9} width="13" height="12" viewBox="0 0 13 12">
          <path d="M6.5 0L13 12H0Z" fill={ICE} />
        </FontArrow>
      </ActionButton>
      <ActionButton $gap={5}>
        <FontGlyph $size={36}>A</FontGlyph>
        <FontArrow $top={5} width="13" height="12" viewBox="0 0 13 12">
          <path d="M6.5 12L0 0H13Z" fill={ICE} />
        </FontArrow>
      </ActionButton>
      <BufferToggle $w={335} $h={44}>
        <Segment>All buffers</Segment>
        <Segment $on>Current buffer</Segment>
      </BufferToggle>
      <SearchGroup>
        <ActionButton $gap={0}>
          <FilterIcon />
        </ActionButton>
        <SearchLabel>Search:</SearchLabel>
        <SelectBox>All fields</SelectBox>
        <EnterValue>[Enter value]</EnterValue>
        <ActionButton $gap={11}>
          <Chevron up />
        </ActionButton>
        <ActionButton $gap={5}>
          <Chevron />
        </ActionButton>
      </SearchGroup>
    </ActionRow>
    <TableWrap>
      <HeadRow>
        {HEADERS.map((h) => (
          <HeadCell key={h}>
            <HeadText>{h}</HeadText>
            <Sort />
          </HeadCell>
        ))}
      </HeadRow>
      {ROWS.map((row, i) => (
        <DataRow key={row[0]} $odd={i % 2 === 0}>
          {row.map((v, j) => (
            <DataCell key={j}>{v}</DataCell>
          ))}
        </DataRow>
      ))}
    </TableWrap>
    <VScrollThumb />
    <HScrollThumb />
  </DataPanel>
);

export default function App() {
  return (
    <>
      <GlobalStyle />
      <Page>
        <Left />
        <Main>
          <Top />
          <Workspace>
            <Config />
            <RightColumn>
              <Plot />
              <DataTable />
            </RightColumn>
          </Workspace>
        </Main>
      </Page>
    </>
  );
}
